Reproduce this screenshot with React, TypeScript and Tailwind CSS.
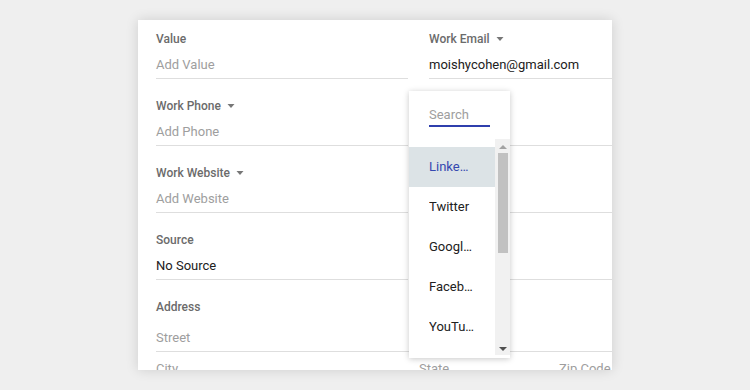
import React from "react";

const font = { fontFamily: "Roboto, 'Liberation Sans', sans-serif" };

function Caret() {
  return (
    <svg width="8" height="4" viewBox="0 0 8 4" className="ml-[6px] inline-block">
      <path d="M0.5 0 L7.5 0 L4 4 Z" fill="#777" />
    </svg>
  );
}

function Field({
  label,
  value,
  placeholder,
  caret,
}: {
  label?: string;
  value?: string;
  placeholder?: string;
  caret?: boolean;
}) {
  return (
    <div className="flex flex-col">
      <div className="h-[16px] text-[12px] leading-[16px] font-medium text-[#6b6b6b] flex items-center whitespace-nowrap">
        {label}
        {caret && label ? <Caret /> : null}
      </div>
      <div className="mt-[7px] pb-[3px] border-b border-[#dedede]">
        <div
          className={
            "h-[21px] text-[13px] leading-[21px] whitespace-nowrap " +
            (value ? "text-[#212121]" : "text-[#9e9e9e]")
          }
        >
          {value || placeholder || ""}
        </div>
      </div>
    </div>
  );
}

const items = ["LinkedIn", "Twitter", "Google+", "Facebook", "YouTube", "Instagram"];

export default function App() {
  return (
    <div className="w-[750px] h-[390px] bg-[#efefef] pl-[138px] pt-[20px]" style={font}>
      <div className="relative w-[474px] h-[350px] bg-white overflow-hidden shadow-[0_0_12px_rgba(0,0,0,0.14)]">
        <div className="pl-[18px] pt-[11px] flex flex-col">
          <div className="grid grid-cols-[252px_252px] gap-x-[21px]">
            <Field label="Value" placeholder="Add Value" />
            <Field label="Work Email" caret value="moishycohen@gmail.com" />
          </div>
          <div className="mt-[19px] grid grid-cols-[252px_252px] gap-x-[21px]">
            <Field label="Work Phone" caret placeholder="Add Phone" />
            <Field label="" />
          </div>
          <div className="mt-[19px] grid grid-cols-[252px_252px] gap-x-[21px]">
            <Field label="Work Website" caret placeholder="Add Website" />
            <Field label="" />
          </div>
          <div className="mt-[19px] grid grid-cols-[252px_252px] gap-x-[21px]">
            <Field label="Source" value="No Source" />
            <Field label="" />
          </div>
          <div className="mt-[19px] flex flex-col w-[525px]">
            <div className="h-[16px] text-[12px] leading-[16px] font-medium text-[#6b6b6b]">Address</div>
            <div className="mt-[12px] pb-[3px] border-b border-[#dedede]">
              <div className="h-[21px] text-[13px] leading-[21px] text-[#9e9e9e]">Street</div>
            </div>
            <div className="mt-[6px] flex text-[13px] leading-[21px] text-[#9e9e9e]">
              <div className="w-[243px] mr-[20px]">City</div>
              <div className="w-[120px] mr-[20px]">State</div>
              <div className="w-[120px] whitespace-nowrap">Zip Code</div>
            </div>
          </div>
        </div>

        {/* Dropdown */}
        <div className="absolute left-[271px] top-[71px] w-[101px] h-[267px] bg-white shadow-[0_1px_6px_rgba(0,0,0,0.22)] flex flex-col">
          <div className="pl-[20px] pt-[14px]">
            <div className="w-[61px] h-[22px] text-[13px] leading-[20px] text-[#9e9e9e] border-b-2 border-[#2f3fad]">
              Search
            </div>
          </div>
          <div className="mt-[12px] flex flex-1 min-h-0">
            <div className="w-[86px] pt-[8px] overflow-hidden">
              {items.map((it, i) => (
                <div
                  key={it}
                  className={
                    "h-[40px] pl-[20px] pr-[21px] flex items-center text-[13px] " +
                    (i === 0 ? "bg-[#dce3e6] text-[#3548b0]" : "text-[#212121]")
                  }
                >
                  <span className="block w-full truncate">{it}</span>
                </div>
              ))}
            </div>
            <div className="w-[15px] bg-[#f1f1f1] flex flex-col items-center mb-[3px]">
              <svg width="8" height="4" viewBox="0 0 8 4" className="mt-[6px]">
                <path d="M0 4 L8 4 L4 0 Z" fill="#a3a3a3" />
              </svg>
              <div className="mt-[4px] w-[10px] h-[100px] bg-[#c1c1c1]" />
              <div className="flex-1" />
              <svg width="8" height="4" viewBox="0 0 8 4" className="mb-[4px]">
                <path d="M0 0 L8 0 L4 4 Z" fill="#505050" />
              </svg>
            </div>
          </div>
        </div>
      </div>
    </div>
  );
}
